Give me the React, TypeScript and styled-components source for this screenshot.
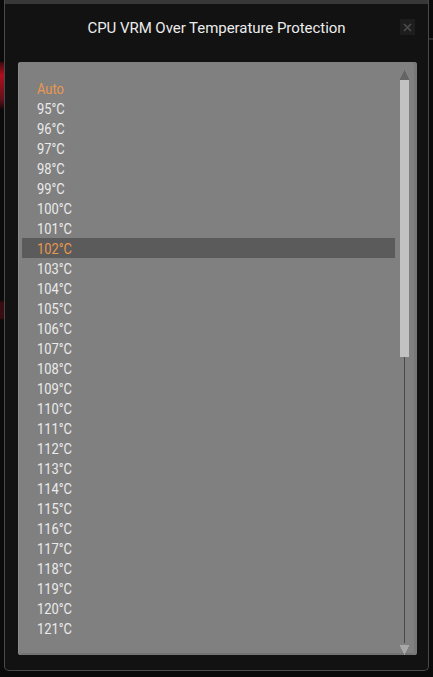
import React from "react";
import styled, { createGlobalStyle } from "styled-components";

const Global = createGlobalStyle`
  html, body { margin: 0; padding: 0; background: #0a0a0a; }
  body { width: 433px; height: 677px; overflow: hidden; font-family: Roboto, "Noto Sans", "Liberation Sans", sans-serif; }
`;

const Stage = styled.div`
  display: flex;
  width: 433px;
  height: 677px;
  background: #0a0a0a;
`;

const SideStrip = styled.div<{ $side: "left" | "right" }>`
  width: 4px;
  flex: none;
  background: ${(p) =>
    p.$side === "left"
      ? "linear-gradient(to bottom, #0a0a0a 0, #0a0a0a 62px, #3a0a10 62px, #b0101e 75px, #60101a 100px, #0a0a0a 110px, #0a0a0a 300px, #3a0d12 303px, #3a0d12 318px, #0a0a0a 320px)"
      : "linear-gradient(to bottom, #0a0a0a 0, #0a0a0a 38px, #2a2a2a 38px, #2a2a2a 40px, #0a0a0a 40px)"};
`;

const Modal = styled.div`
  width: 425px;
  height: 671px;
  box-sizing: border-box;
  background: #121212;
  border: 1px solid #4a4a4a;
  border-top: none;
  border-radius: 0 0 5px 5px;
  display: flex;
  flex-direction: column;
`;

const Dots = styled.div`
  height: 4px;
  flex: none;
  background-color: #1a1a1a;
  background-image: radial-gradient(#3a3a3a 0.7px, transparent 0.8px);
  background-size: 2px 2px;
`;

const Header = styled.div`
  height: 58px;
  flex: none;
  display: flex;
  align-items: center;
  justify-content: center;
  position: relative;
  padding-bottom: 10px;
  box-sizing: border-box;
`;

const Title = styled.div`
  color: #ececec;
  font-size: 15px;
  letter-spacing: -0.05px;
`;

const Close = styled.div`
  position: absolute;
  right: 13px;
  top: 15px;
  width: 15px;
  height: 16px;
  background: #1d1d1d;
  display: flex;
  align-items: center;
  justify-content: center;
`;

const Panel = styled.div`
  margin: 0 11px 0 13px;
  height: 593px;
  background: #808080;
  border-radius: 3px;
  box-shadow: inset 1px 0 0 #8c8c8c, inset -3px 0 0 #787878, inset 0 -2px 0 #747474;
  display: flex;
  box-sizing: border-box;
  padding: 16px 0 0 4px;
`;

const List = styled.div`
  flex: 1;
  display: flex;
  flex-direction: column;
`;

const Row = styled.div<{ $selected?: boolean; $accent?: boolean }>`
  height: 20px;
  line-height: 22px;
  padding-left: 15px;
  font-size: 15px;
  color: ${(p) => (p.$accent || p.$selected ? "#e9984f" : "#ebebeb")};
  background: ${(p) => (p.$selected ? "#5b5b5b" : "transparent")};
  white-space: nowrap;
  overflow: hidden;
`;

const Label = styled.span`
  display: inline-block;
  transform: scaleX(0.86);
  transform-origin: left center;
`;

const Scroll = styled.div`
  width: 9px;
  margin: -8px 8px 0 5px;
  display: flex;
  flex-direction: column;
  align-items: center;
`;

const Arrow = styled.svg`
  flex: none;
  display: block;
`;

const Thumb = styled.div`
  width: 9px;
  height: 277px;
  background: #c2c2c2;
  flex: none;
`;

const Track = styled.div`
  width: 1px;
  flex: 1;
  background: #4a4a4a;
  margin-bottom: 2px;
`;

const items = ["Auto", ...Array.from({ length: 27 }, (_, i) => `${95 + i}°C`)];

export default function App() {
  return (
    <>
      <Global />
      <Stage>
        <SideStrip $side="left" />
        <Modal>
          <Dots />
          <Header>
            <Title>CPU VRM Over Temperature Protection</Title>
            <Close>
              <svg width="9" height="9" viewBox="0 0 9 9">
                <path d="M1 1L8 8M8 1L1 8" stroke="#4c4c4c" strokeWidth="1.6" />
              </svg>
            </Close>
          </Header>
          <Panel>
            <List>
              {items.map((t, i) => (
                <Row key={t} $accent={i === 0} $selected={t === "102°C"}>
                  <Label>{t}</Label>
                </Row>
              ))}
            </List>
            <Scroll>
              <Arrow width="9" height="10" viewBox="0 0 9 10">
                <path d="M4 1h1M3 3h3M2 5h5M1 7h7M0 9h9" stroke="#4a4a4a" strokeWidth="1" />
              </Arrow>
              <Thumb />
              <Track />
              <Arrow width="9" height="10" viewBox="0 0 9 10">
                <path d="M0 1h9M1 3h7M2 5h5M3 7h3M4 9h1" stroke="#d0d0d0" strokeWidth="1" />
              </Arrow>
            </Scroll>
          </Panel>
        </Modal>
        <SideStrip $side="right" />
      </Stage>
    </>
  );
}
